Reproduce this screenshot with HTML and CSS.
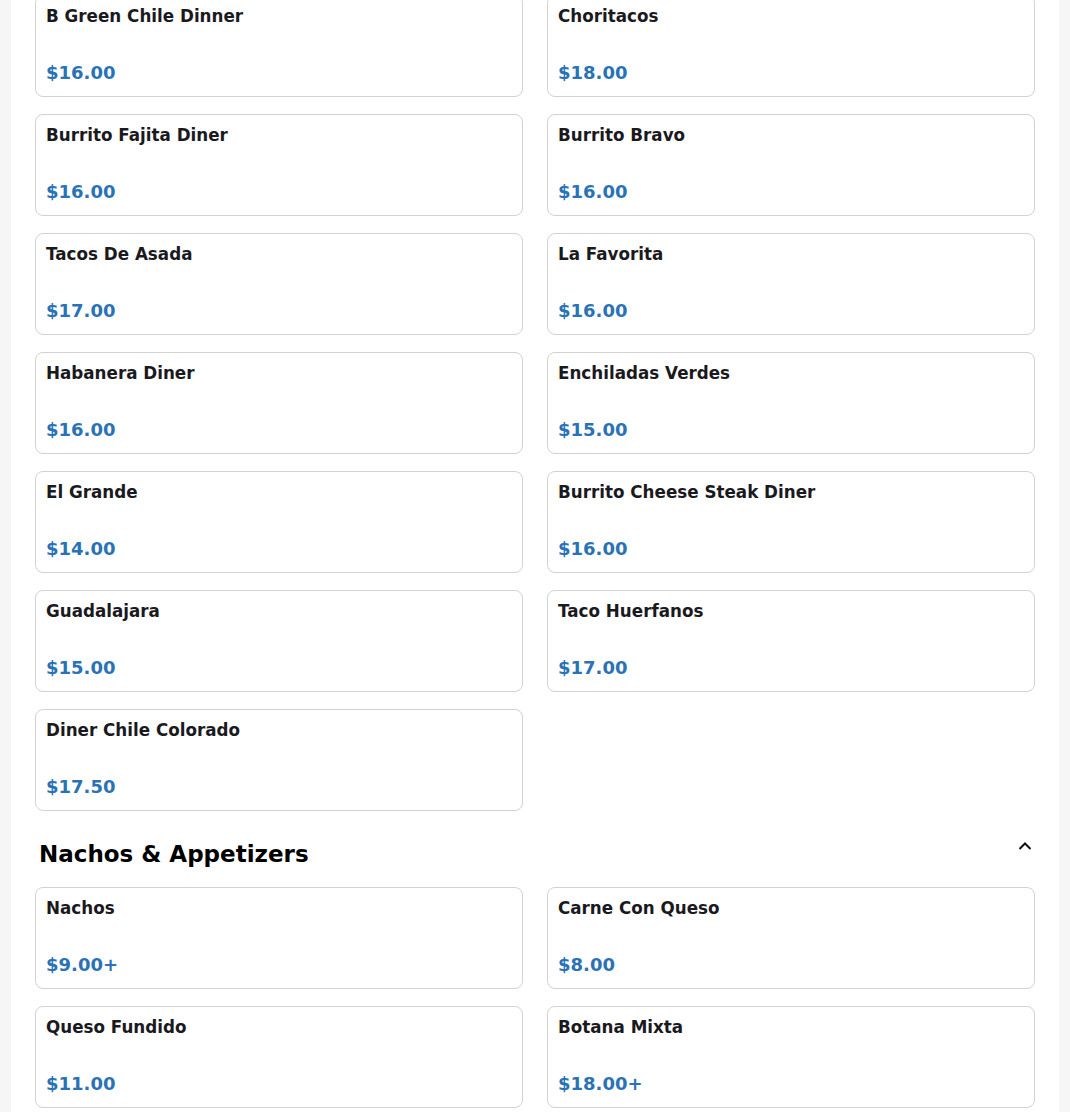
FILE: index.html
```html
<!DOCTYPE html>
<html lang="en">
<head>
<meta charset="utf-8">
<title>Menu</title>
<link rel="stylesheet" href="styles.css">
</head>
<body>
<main class="panel">
  <section class="menu-section">
    <div class="grid">
      <div class="card"><div class="name">B Green Chile Dinner</div><div class="price">$16.00</div></div>
      <div class="card"><div class="name">Choritacos</div><div class="price">$18.00</div></div>
      <div class="card"><div class="name">Burrito Fajita Diner</div><div class="price">$16.00</div></div>
      <div class="card"><div class="name">Burrito Bravo</div><div class="price">$16.00</div></div>
      <div class="card"><div class="name">Tacos De Asada</div><div class="price">$17.00</div></div>
      <div class="card"><div class="name">La Favorita</div><div class="price">$16.00</div></div>
      <div class="card"><div class="name">Habanera Diner</div><div class="price">$16.00</div></div>
      <div class="card"><div class="name">Enchiladas Verdes</div><div class="price">$15.00</div></div>
      <div class="card"><div class="name">El Grande</div><div class="price">$14.00</div></div>
      <div class="card"><div class="name">Burrito Cheese Steak Diner</div><div class="price">$16.00</div></div>
      <div class="card"><div class="name">Guadalajara</div><div class="price">$15.00</div></div>
      <div class="card"><div class="name">Taco Huerfanos</div><div class="price">$17.00</div></div>
      <div class="card"><div class="name">Diner Chile Colorado</div><div class="price">$17.50</div></div>
    </div>
  </section>
  <section class="menu-section">
    <div class="section-head">
      <h2 class="section-title">Nachos &amp; Appetizers</h2>
      <svg class="chevron" width="16" height="16" viewBox="0 0 16 16" aria-hidden="true"><path d="M2.5 11 L8 5.5 L13.5 11" fill="none" stroke="#111" stroke-width="2"/></svg>
    </div>
    <div class="grid">
      <div class="card"><div class="name">Nachos</div><div class="price">$9.00+</div></div>
      <div class="card"><div class="name">Carne Con Queso</div><div class="price">$8.00</div></div>
      <div class="card"><div class="name">Queso Fundido</div><div class="price">$11.00</div></div>
      <div class="card"><div class="name">Botana Mixta</div><div class="price">$18.00+</div></div>
    </div>
  </section>
</main>
</body>
</html>
```

FILE: styles.css
```css
html, body {
  margin: 0;
  padding: 0;
}
body {
  background: #f6f6f6;
  font-family: "DejaVu Sans", "Liberation Sans", sans-serif;
  color: #1a1a1e;
  overflow: hidden;
}
.panel {
  max-width: 1048px;
  margin: -5px auto 0;
  background: #fff;
  padding: 0 24px 40px;
  box-sizing: border-box;
  min-height: 1200px;
}
.grid {
  display: grid;
  grid-template-columns: 1fr 1fr;
  column-gap: 24px;
  row-gap: 17px;
}
.card {
  border: 1px solid #d2d2d2;
  border-radius: 8px;
  padding: 10px;
  height: 102px;
  box-sizing: border-box;
  display: flex;
  flex-direction: column;
  justify-content: space-between;
}
.name {
  font-size: 16.75px;
  font-weight: bold;
  line-height: 20px;
}
.price {
  font-size: 18px;
  font-weight: bold;
  line-height: 26px;
  color: #2a72b6;
}
.section-head {
  display: flex;
  justify-content: space-between;
  align-items: flex-start;
  padding: 0 4px;
  margin: 25px 0 0;
  height: 51px;
}
.section-title {
  margin: 0;
  font-size: 23px;
  font-weight: bold;
  line-height: 36px;
  color: #000;
}
.chevron {
  margin-top: 2px;
  margin-right: -2px;
}
```
